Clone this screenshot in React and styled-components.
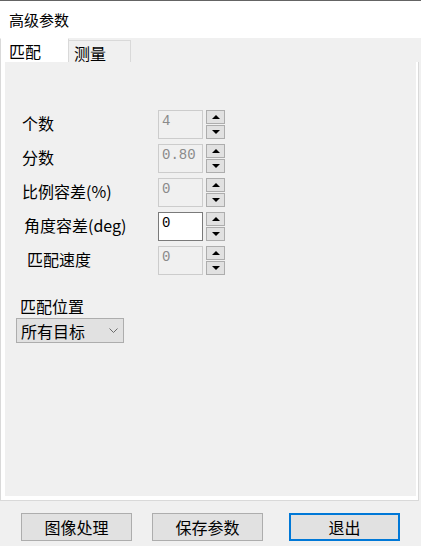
import React from 'react';
import styled, { createGlobalStyle, css } from 'styled-components';

const GlobalStyle = createGlobalStyle`
  html, body {
    margin: 0;
    padding: 0;
    background: #f0f0f0;
  }
  body {
    font-family: "Noto Sans CJK SC", "Liberation Sans", sans-serif;
    color: #000;
  }
`;

const fields = [
  { label: '个数', value: '4', indent: 17 },
  { label: '分数', value: '0.80', indent: 17 },
  { label: '比例容差(%)', value: '0', indent: 17 },
  { label: '角度容差(deg)', value: '0', indent: 19, enabled: true },
  { label: '匹配速度', value: '0', indent: 22 },
];

const Window = styled.div`
  width: 421px;
  height: 546px;
  display: flex;
  flex-direction: column;
  background: #f0f0f0;
  overflow: hidden;
`;

const TitleBar = styled.div`
  height: 37px;
  border-top: 1px solid #646464;
  background: #fff;
  display: flex;
  align-items: center;
  padding-left: 9px;
  font-size: 15px;
`;

const TabStrip = styled.div`
  display: flex;
  align-items: flex-end;
  height: 24px;
  width: 419px;
`;

const Tab = styled.div`
  box-sizing: border-box;
  display: flex;
  align-items: center;
  font-size: 16px;
  line-height: 1;
  border: 1px solid #d9d9d9;
  border-bottom: none;
  ${p => p.active ? css`
    width: 69px;
    height: 24px;
    padding-left: 8px;
    background: #fff;
    border-top-color: #fff;
  ` : css`
    width: 62px;
    height: 22px;
    padding: 2px 0 0 5px;
    border-left: none;
    background: #f0f0f0;
  `}
`;

const Panel = styled.div`
  box-sizing: border-box;
  width: 419px;
  height: 439px;
  border: 1px solid #d9d9d9;
  border-top: none;
  background: #fff;
  padding: 0 2px 4px 4px;
  display: flex;
`;

const Page = styled.div`
  flex: 1;
  background: #f0f0f0;
  padding-top: 48px;
  display: flex;
  flex-direction: column;
`;

const FieldList = styled.div`
  display: flex;
  flex-direction: column;
  gap: 5px;
`;

const FieldRow = styled.div`
  display: grid;
  grid-template-columns: ${p => 150 - p.indent}px 45px 19px;
  column-gap: 3px;
  height: 29px;
  padding-left: ${p => p.indent}px;
  align-items: center;
`;

const FieldLabel = styled.span`
  font-size: 16px;
  line-height: 20px;
  margin-top: -3px;
`;

const ValueBox = styled.div`
  box-sizing: border-box;
  height: 29px;
  padding: 2px 3px;
  font-family: "Liberation Mono", "DejaVu Sans Mono", monospace;
  font-size: 14px;
  line-height: 16px;
  border: 1px solid ${p => p.enabled ? '#7a7a7a' : '#cccccc'};
  background: ${p => p.enabled ? '#fff' : '#f0f0f0'};
  color: ${p => p.enabled ? '#000' : '#8a8a8a'};
`;

const Spinner = styled.div`
  display: flex;
  flex-direction: column;
  gap: 1px;
  height: 29px;
`;

const SpinButton = styled.div`
  box-sizing: border-box;
  flex: 1;
  border: 1px solid #adadad;
  background: #e1e1e1;
  display: flex;
  align-items: center;
  justify-content: center;
`;

const Arrow = styled.span`
  width: 0;
  height: 0;
  border-left: 4px solid transparent;
  border-right: 4px solid transparent;
  ${p => p.down
    ? css`border-top: 4px solid #000;`
    : css`border-bottom: 4px solid #000;`}
`;

const SectionLabel = styled.div`
  font-size: 16px;
  line-height: 20px;
  margin: 21px 0 2px 15px;
`;

const Select = styled.div`
  box-sizing: border-box;
  width: 108px;
  height: 25px;
  margin-left: 11px;
  border: 1px solid #adadad;
  background: #e1e1e1;
  display: flex;
  align-items: center;
  padding: 0 5px 0 4px;
  font-size: 16px;

  svg {
    margin-left: auto;
    flex-shrink: 0;
  }
`;

const ButtonBar = styled.div`
  display: flex;
  padding: 12px 0 0 21px;
  gap: 20px;
`;

const Button = styled.div`
  box-sizing: border-box;
  width: 111px;
  height: 28px;
  display: flex;
  align-items: center;
  justify-content: center;
  font-size: 16px;
  background: #e1e1e1;
  border: ${p => p.primary ? '2px solid #0078d7' : '1px solid #adadad'};
  margin-left: ${p => p.primary ? 6 : 0}px;
`;

const Chevron = () => (
  <svg width="9" height="5" viewBox="0 0 9 5">
    <polyline points="0.5,0.5 4.5,4.5 8.5,0.5" fill="none" stroke="#6a6a6a" strokeWidth="1" />
  </svg>
);

const App = () => {
  return (
    <Window>
      <GlobalStyle />
      <TitleBar>高级参数</TitleBar>
      <TabStrip>
        <Tab active>匹配</Tab>
        <Tab>测量</Tab>
      </TabStrip>
      <Panel>
        <Page>
          <FieldList>
            {fields.map(f => (
              <FieldRow key={f.label} indent={f.indent}>
                <FieldLabel>{f.label}</FieldLabel>
                <ValueBox enabled={f.enabled}>{f.value}</ValueBox>
                <Spinner>
                  <SpinButton><Arrow /></SpinButton>
                  <SpinButton><Arrow down /></SpinButton>
                </Spinner>
              </FieldRow>
            ))}
          </FieldList>
          <SectionLabel>匹配位置</SectionLabel>
          <Select>
            <span>所有目标</span>
            <Chevron />
          </Select>
        </Page>
      </Panel>
      <ButtonBar>
        <Button>图像处理</Button>
        <Button>保存参数</Button>
        <Button primary>退出</Button>
      </ButtonBar>
    </Window>
  );
};

export default App;
